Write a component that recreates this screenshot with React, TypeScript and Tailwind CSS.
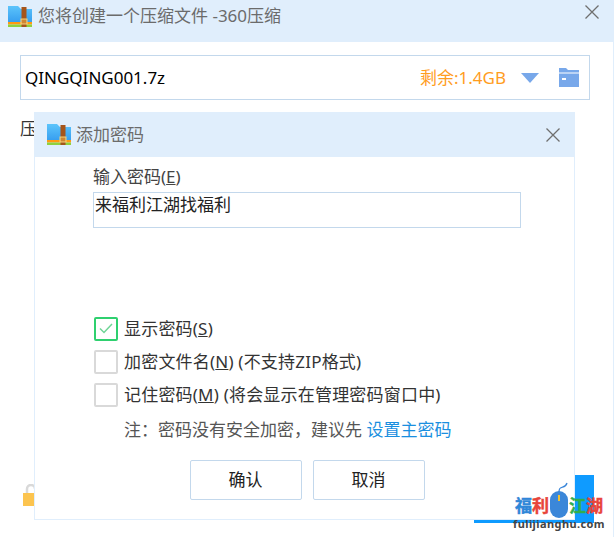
import { ReactNode } from 'react'

const font = 'font-["Noto_Sans","Noto_Sans_CJK_SC",sans-serif]'

function ZipIcon({ id }: { id: string }) {
  return (
    <svg width="24" height="21" viewBox="0 0 24 21" className="shrink-0">
      <defs>
        <linearGradient id={id} x1="0" y1="0" x2="0" y2="1">
          <stop offset="0" stopColor="#5cc4fb" />
          <stop offset="1" stopColor="#379ff0" />
        </linearGradient>
      </defs>
      <path d="M0 0h10l3 3h11v13H0z" fill={`url(#${id})`} />
      <rect x="0" y="16" width="24" height="2.5" fill="#ff9a12" />
      <rect x="0" y="18.5" width="24" height="2.5" fill="#8fd13f" />
      <rect x="13.5" y="1" width="5" height="20" fill="#a5551b" />
      <rect x="13" y="13" width="6" height="5" fill="#f9b84a" fillOpacity="0.5" stroke="#f6d27a" strokeWidth="1" />
    </svg>
  )
}

function CloseIcon() {
  return (
    <svg width="16" height="16" viewBox="0 0 16 16">
      <path d="M1.5 1.5l13 13M14.5 1.5l-13 13" stroke="#6f6f6f" strokeWidth="1.3" />
    </svg>
  )
}

function CheckBox({ checked }: { checked?: boolean }) {
  return (
    <span
      className={`flex h-[24px] w-[24px] shrink-0 items-center justify-center rounded-[2px] border-2 bg-white ${
        checked ? 'border-[#2fd06f]' : 'border-[#d9d9d9]'
      }`}
    >
      {checked && (
        <svg width="14" height="11" viewBox="0 0 14 11">
          <path d="M1 5.5l4 4 8-8.5" fill="none" stroke="#6fd596" strokeWidth="1.5" />
        </svg>
      )}
    </span>
  )
}

function Option({ checked, children }: { checked?: boolean; children: ReactNode }) {
  return (
    <div className="flex h-[33px] items-center gap-[6px] text-[17px] tracking-[0.2px] text-[#333]">
      <CheckBox checked={checked} />
      <span className="whitespace-nowrap">{children}</span>
    </div>
  )
}

function Watermark() {
  return (
    <div className="absolute left-[513px] top-[482px] flex w-[92px] flex-col items-center">
      <div className="flex h-[36px] items-end text-[17px] font-bold leading-[24px] [-webkit-text-stroke:0.5px_currentColor]">
        <span className="text-[#2f86d8]">福</span>
        <span className="text-[#e8443a]">利</span>
        <svg width="20" height="36" viewBox="0 0 20 36" className="shrink-0">
          <path d="M10 10C10 2 16 8 18 1" fill="none" stroke="#3b87d9" strokeWidth="1.3" />
          <rect x="1" y="9" width="18" height="27" rx="9" fill="#3b87d9" />
          <rect x="9" y="13" width="2" height="6" fill="#f2c230" />
        </svg>
        <span className="text-[#2fae4e]">江</span>
        <span className="text-[#e8443a]">湖</span>
      </div>
      <div className="whitespace-nowrap text-[11px] font-bold leading-[11px] tracking-[0.4px] text-[#444]">
        fulijianghu.com
      </div>
    </div>
  )
}

export default function App() {
  return (
    <div className={`relative h-[537px] w-[614px] overflow-hidden border-r border-[#e0eefc] bg-white ${font}`}>
      {/* main window */}
      <div className="flex h-[42px] items-start justify-between bg-[#e0eefc] pl-[8px] pr-[13px]">
        <div className="flex items-center gap-[6px] pt-[4px] text-[17px] leading-[24px] text-[#6b6b6b]">
          <ZipIcon id="zip-main" />
          <span>您将创建一个压缩文件 -360压缩</span>
        </div>
        <div className="pt-[4px]">
          <CloseIcon />
        </div>
      </div>

      <div className="ml-[20px] mt-[13px] flex h-[45px] w-[570px] items-center border border-[#c3d8ec] pl-[4px] pr-[10px]">
        <span className="text-[17px] text-black">QINGQING001.7z</span>
        <span className="ml-auto text-[17px] text-[#ff9d1e]">剩余:1.4GB</span>
        <svg width="18" height="10" viewBox="0 0 18 10" className="ml-[15px]">
          <path d="M0 0h18L9 10z" fill="#78a8ea" />
        </svg>
        <svg width="20" height="19" viewBox="0 0 20 19" className="ml-[20px]">
          <path d="M0 0h7l2 2h11v17H0z" fill="#78a8ea" />
          <path d="M0 5h20" stroke="#fff" strokeWidth="1" />
          <rect x="3" y="10" width="4" height="2" fill="#fff" />
        </svg>
      </div>

      <div className="ml-[20px] mt-[17px] text-[17px] leading-[24px] text-[#333]">压缩配置</div>

      {/* lock + start button behind the dialog */}
      <svg width="12" height="22" viewBox="0 0 12 22" className="absolute left-[23px] top-[484px]">
        <path d="M4 10V5a4 4 0 0 1 8 0" fill="none" stroke="#d9d9d9" strokeWidth="2.5" />
        <rect x="0" y="9" width="12" height="13" fill="#fcc44f" />
      </svg>
      <div className="absolute left-[474px] top-[475px] h-[48px] w-[120px] bg-[#0f9bff]" />

      {/* add password dialog */}
      <div className="absolute left-[34px] top-[112px] flex h-[408px] w-[541px] flex-col border border-t-0 border-[#e0eefc] bg-white">
        <div className="flex h-[45px] shrink-0 items-center justify-between bg-[#e0eefc] pl-[12px] pr-[13px] text-[17px] text-[#6b6b6b]">
          <div className="flex items-center gap-[5px]">
            <ZipIcon id="zip-dialog" />
            <span>添加密码</span>
          </div>
          <CloseIcon />
        </div>

        <div className="pl-[58px]">
          <div className="mt-[8px] text-[17px] leading-[24px] text-[#444]">
            输入密码(<span className="underline">E</span>)
          </div>
          <div className="mt-[3px] h-[36px] w-[428px] border border-[#c3d8ec] pl-[1px] text-[17px] leading-[24px] text-[#222]">
            来福利江湖找福利
          </div>

          <div className="mt-[84px] pl-px">
            <Option checked>
              显示密码(<span className="underline">S</span>)
            </Option>
            <Option>
              加密文件名(<span className="underline">N</span>) (不支持ZIP格式)
            </Option>
            <Option>
              记住密码(<span className="underline">M</span>) (将会显示在管理密码窗口中)
            </Option>
          </div>

          <div className="mt-[7px] whitespace-nowrap pl-[31px] text-[17px] leading-[24px] text-[#555]">
            注{'\uFF1A'}密码没有安全加密{'\uFF0C'}建议先 <span className="text-[#1a8fe0]">设置主密码</span>
          </div>
        </div>

        <div className="mt-[18px] flex justify-center gap-[11px] pl-[5px] text-[17px] text-[#222]">
          <button className="h-[40px] w-[112px] rounded-[2px] border border-[#c3d8ec] bg-white">确认</button>
          <button className="h-[40px] w-[112px] rounded-[2px] border border-[#c3d8ec] bg-white">取消</button>
        </div>
      </div>

      <Watermark />
    </div>
  )
}
